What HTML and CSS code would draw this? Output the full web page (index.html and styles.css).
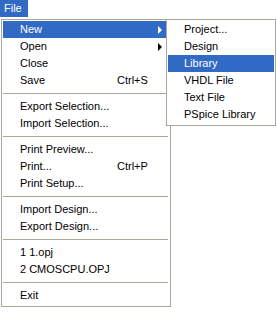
FILE: index.html
```html
<!DOCTYPE html>
<html lang="en">
<head>
  <meta charset="UTF-8">
  <title>File menu</title>
  <link rel="stylesheet" href="styles.css">
</head>
<body>
  <div class="menubar">
    <span class="menubar-item active">File</span>
  </div>

  <div class="dropdown">
    <ul class="menu main-menu">
      <li class="item active"><span class="label">New</span><span class="arrow"></span></li>
      <li class="item"><span class="label">Open</span><span class="arrow"></span></li>
      <li class="item"><span class="label">Close</span></li>
      <li class="item"><span class="label">Save</span><span class="key">Ctrl+S</span></li>
      <li class="sep"></li>
      <li class="item"><span class="label">Export Selection...</span></li>
      <li class="item"><span class="label">Import Selection...</span></li>
      <li class="sep"></li>
      <li class="item"><span class="label">Print Preview...</span></li>
      <li class="item"><span class="label">Print...</span><span class="key">Ctrl+P</span></li>
      <li class="item"><span class="label">Print Setup...</span></li>
      <li class="sep"></li>
      <li class="item"><span class="label">Import Design...</span></li>
      <li class="item"><span class="label">Export Design...</span></li>
      <li class="sep"></li>
      <li class="item"><span class="label">1 1.opj</span></li>
      <li class="item"><span class="label">2 CMOSCPU.OPJ</span></li>
      <li class="sep"></li>
      <li class="item"><span class="label">Exit</span></li>
    </ul>

    <!-- submenu of "New" -->
    <ul class="menu sub-menu">
      <li class="item"><span class="label">Project...</span></li>
      <li class="item"><span class="label">Design</span></li>
      <li class="item active"><span class="label">Library</span></li>
      <li class="item"><span class="label">VHDL File</span></li>
      <li class="item"><span class="label">Text File</span></li>
      <li class="item"><span class="label">PSpice Library</span></li>
    </ul>
  </div>
</body>
</html>
```
FILE: styles.css
```css
body {
  margin: 0;
  background-color: #ffffff;
  font-family: 'Liberation Sans', Arial, sans-serif;
  font-size: 11px;
  color: #000000;
}

.menubar {
  display: flex;
  height: 17px;
}

.menubar-item {
  width: 28px;
  padding-left: 4px;
  box-sizing: border-box;
  line-height: 17px;
}

.menubar-item.active {
  background-color: #316ac5;
  color: #ffffff;
}

.dropdown {
  position: relative;
  margin: 2px 0 0 1px;
}

.menu {
  list-style: none;
  margin: 0;
  padding: 1px 1px 2px 1px;
  border: 1px solid #aca899;
  background-color: #ffffff;
}

.main-menu {
  width: 166px;
}

.sub-menu {
  position: absolute;
  top: 0;
  left: 165px;
  width: 106px;
}

.item {
  display: flex;
  align-items: center;
  height: 17px;
  line-height: 17px;
  padding: 0 7px 0 17px;
  white-space: nowrap;
}

.sub-menu .item {
  padding-left: 16px;
}

.item.active {
  background-color: #316ac5;
  color: #ffffff;
}

.main-menu .label {
  flex: 0 0 97px;
}

.key {
  flex: 1;
}

.arrow {
  margin-left: auto;
  width: 0;
  height: 0;
  border-top: 4px solid transparent;
  border-bottom: 4px solid transparent;
  border-left: 4px solid #000000;
}

.item.active .arrow {
  border-left-color: #ffffff;
}

.sep {
  height: 9px;
  display: flex;
  align-items: center;
  padding: 0 1px 0 0;
}

.sep::before {
  content: "";
  flex: 1;
  height: 1px;
  background-color: #aca899;
}
```
